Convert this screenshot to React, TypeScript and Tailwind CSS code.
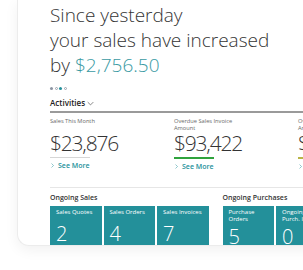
const font = { fontFamily: '"Open Sans", "Liberation Sans", sans-serif' };

const Chevron = ({ dir, className }: { dir: 'down' | 'right'; className?: string }) => (
  <svg viewBox="0 0 10 10" className={className} fill="none" stroke="currentColor" strokeWidth="1">
    {dir === 'down' ? <polyline points="1,3 5,7 9,3" /> : <polyline points="3,1 7,5 3,9" />}
  </svg>
);

const kpis = [
  { label: ['Sales This Month'], value: '$23,876', bar: 'h-px bg-[#d6d6d6]' },
  { label: ['Overdue Sales Invoice', 'Amount'], value: '$93,422', bar: 'h-[2px] bg-[#2fa33d]' },
  { label: ['Overdue Purch. Invoice', 'Amount'], value: '$12,318', bar: 'h-[2px] bg-[#b9b547]' },
];

const Tile = ({ label, value }: { label: string[]; value: string }) => (
  <div className="h-[60px] w-[51.5px] shrink-0 bg-[#23909a] pl-[6px] pt-[3px] text-white">
    <div className="min-h-[10px] text-[6px] leading-[6.5px]">
      {label.map((l) => (
        <div key={l} className="whitespace-nowrap">{l}</div>
      ))}
    </div>
    <div className="mt-[5px] text-[20px] font-light leading-[20px]">{value}</div>
  </div>
);

export default function App() {
  return (
    <div className="h-[270px] w-[303px] overflow-hidden bg-white" style={font}>
      <div className="ml-[17px] h-[246px] w-[400px] overflow-hidden rounded-bl-[12px] border-b border-l border-[#ececec] bg-white pl-[32px] pt-[3px] shadow-[0_4px_14px_rgba(0,0,0,0.06)]">
        <div className="text-[19px] font-light leading-[25px] text-[#353535]">
          <div>Since yesterday</div>
          <div>your sales have increased</div>
          <div>
            by <span className="text-[#3a9aa3]">$2,756.50</span>
          </div>
        </div>

        <div className="mt-[9px] flex h-[3px] gap-[1.5px]">
          <span className="h-[3px] w-[3px] rounded-full bg-[#8d95a3]" />
          <span className="h-[3px] w-[3px] rounded-full border-[0.5px] border-[#9aa1ad]" />
          <span className="h-[3px] w-[3px] rounded-full bg-[#23909a]" />
          <span className="h-[3px] w-[3px] rounded-full border-[0.5px] border-[#9aa1ad]" />
        </div>

        <div className="mt-[8px] h-[15px] border-b-2 border-[#9a9a9a]">
          <div className="flex items-center gap-[2px] text-[8px] font-semibold leading-[10px] text-[#222]">
            Activities
            <Chevron dir="down" className="h-[7px] w-[7px] text-[#555]" />
          </div>
        </div>

        <div className="flex pt-[5px]">
          {kpis.map((k) => (
            <div key={k.value} className="w-[124px] shrink-0">
              <div className="h-[14px] text-[5.7px] leading-[7px] text-[#6a6a6a]">
                {k.label.map((l) => (
                  <div key={l} className="whitespace-nowrap">{l}</div>
                ))}
              </div>
              <div className="text-[21px] font-light leading-[22px] tracking-[-1.2px] text-[#333]">{k.value}</div>
              <div className={`mt-[3px] w-[40px] ${k.bar}`} />
              <div className="mt-[3px] flex items-center gap-[3px] text-[7px] font-semibold leading-[9px] text-[#23909a]">
                <Chevron dir="right" className="h-[7px] w-[5px]" />
                See More
              </div>
            </div>
          ))}
        </div>

        <div className="mt-[16px] border-t border-[#e6e6e6] pt-[5px]">
          <div className="flex gap-[14px]">
            <div>
              <div className="text-[7px] font-semibold leading-[9px] text-[#333]">Ongoing Sales</div>
              <div className="mt-[4px] flex gap-[2px]">
                <Tile label={['Sales Quotes']} value="2" />
                <Tile label={['Sales Orders']} value="4" />
                <Tile label={['Sales Invoices']} value="7" />
              </div>
            </div>
            <div>
              <div className="text-[7px] font-semibold leading-[9px] text-[#333]">Ongoing Purchases</div>
              <div className="mt-[4px] flex gap-[2px]">
                <Tile label={['Purchase', 'Orders']} value="5" />
                <Tile label={['Ongoing', 'Purch. Invoices']} value="0" />
              </div>
            </div>
          </div>
        </div>
      </div>
    </div>
  );
}
